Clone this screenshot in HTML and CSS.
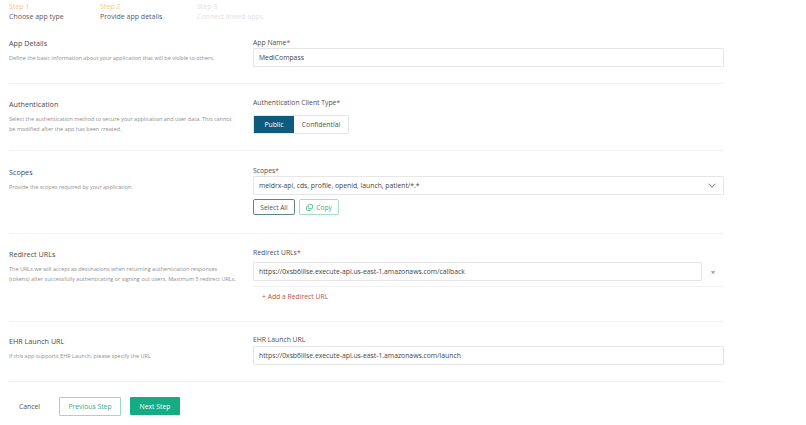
FILE: index.html
```html
<!DOCTYPE html>
<html>
<head>
<meta charset="utf-8">
<link rel="stylesheet" href="styles.css">
</head>
<body>
<div class="page">
  <div class="steps">
    <div class="step done"><div class="step-num">Step 1</div><div class="step-name">Choose app type</div></div>
    <div class="step current"><div class="step-num">Step 2</div><div class="step-name">Provide app details</div></div>
    <div class="step todo"><div class="step-num">Step 3</div><div class="step-name">Connect linked apps</div></div>
  </div>

  <div class="section s1">
    <div class="info">
      <div class="title">App Details</div>
      <div class="desc">Define the basic information about your application that will be visible to others.</div>
    </div>
    <div class="field">
      <div class="label">App Name<span class="req">*</span></div>
      <div class="input">MediCompass</div>
    </div>
  </div>

  <div class="section s2">
    <div class="info">
      <div class="title">Authentication</div>
      <div class="desc">Select the authentication method to secure your application and user data. This cannot<br>be modified after the app has been created.</div>
    </div>
    <div class="field">
      <div class="label">Authentication Client Type<span class="req">*</span></div>
      <div class="toggle">
        <div class="opt active">Public</div>
        <div class="opt">Confidential</div>
      </div>
    </div>
  </div>

  <div class="section s3">
    <div class="info">
      <div class="title">Scopes</div>
      <div class="desc">Provide the scopes required by your application.</div>
    </div>
    <div class="field">
      <div class="label">Scopes<span class="req">*</span></div>
      <div class="input select">
        <span>meldrx-api, cds, profile, openid, launch, patient/*.*</span>
        <svg class="chev" width="8" height="5" viewBox="0 0 8 5"><path d="M0.5 0.7 L4 4.2 L7.5 0.7" fill="none" stroke="#666" stroke-width="0.9"/></svg>
      </div>
      <div class="btns">
        <div class="btn sel">Select All</div>
        <div class="btn copy">
          <svg width="7" height="7" viewBox="0 0 8 8"><rect x="2.6" y="0.6" width="4.8" height="4.8" rx="1.2" fill="none" stroke="#3aa982" stroke-width="0.9"/><path d="M1.6 2.4 A1.2 1.2 0 0 0 0.6 3.6 V6.2 A1.2 1.2 0 0 0 1.8 7.4 H4.4 A1.2 1.2 0 0 0 5.6 6.4" fill="none" stroke="#3aa982" stroke-width="0.9"/></svg>
          Copy
        </div>
      </div>
    </div>
  </div>

  <div class="section s4">
    <div class="info">
      <div class="title">Redirect URLs</div>
      <div class="desc">The URLs we will accept as destinations when returning authentication responses<br>(tokens) after successfully authenticating or signing out users. Maximum 5 redirect URLs.</div>
    </div>
    <div class="field">
      <div class="label">Redirect URLs<span class="req">*</span></div>
      <div class="url-row">
        <div class="input grow">https://0xsb6lilse.execute-api.us-east-1.amazonaws.com/callback</div>
        <div class="remove">×</div>
      </div>
      <div class="add">+ Add a Redirect URL</div>
    </div>
  </div>

  <div class="section s5">
    <div class="info">
      <div class="title">EHR Launch URL</div>
      <div class="desc">If this app supports EHR Launch, please specify the URL</div>
    </div>
    <div class="field">
      <div class="label">EHR Launch URL</div>
      <div class="input">https://0xsb6lilse.execute-api.us-east-1.amazonaws.com/launch</div>
    </div>
  </div>

  <div class="footer">
    <div class="cancel">Cancel</div>
    <div class="fbtn prev">Previous Step</div>
    <div class="fbtn next">Next Step</div>
  </div>
</div>
</body>
</html>
```

FILE: styles.css
```css
* { box-sizing: border-box; }
html, body { margin: 0; padding: 0; background: #fff; }
body {
  font-family: "Open Sans", "Noto Sans", sans-serif;
  color: #444;
  width: 806px;
  height: 425px;
  overflow: hidden;
}
.page { padding-left: 9px; width: 724px; }

.steps { display: flex; height: 22px; padding-top: 2px; }
.step { font-size: 7px; line-height: 10px; }
.step.done { width: 91px; }
.step.current { width: 97px; }
.step-num { color: #f2c98e; }
.step-name { color: #5a5a5a; }
.step.todo .step-num, .step.todo .step-name { color: #e2e2e2; }

.section {
  display: flex;
  border-bottom: 1px solid #f1f1f1;
  padding-top: 16px;
}
.info { width: 244px; flex: none; }
.title { font-size: 7.2px; line-height: 10px; color: #4a4a4a; }
.desc {
  margin-top: 5px;
  font-size: 5.5px;
  line-height: 10px;
  color: #8f8f8f;
  width: 240px;
}
.field { width: 471px; flex: none; }
.label { font-size: 6.8px; line-height: 10px; color: #4f4f4f; }
.req { color: #c0392b; }
.input {
  height: 19px;
  border: 1px solid #e6e6e6;
  border-radius: 1px;
  font-size: 6.8px;
  line-height: 17px;
  padding-left: 5px;
  color: #444;
  white-space: nowrap;
}

.s1 { padding-bottom: 16px; }
.s2 { padding-top: 14px; padding-bottom: 16px; }
.s2 .label { margin-bottom: 2px; }
.s2 .title { margin-top: 1px; }
.s3 { padding-top: 15px; padding-bottom: 18px; }
.s3 .title { margin-top: 1px; }
.s4 { padding-top: 14px; padding-bottom: 19px; }
.s4 .title { margin-top: 1px; }
.s4 .label { margin-bottom: 4px; }
.s5 { padding-top: 13px; padding-bottom: 16px; }
.s5 .title { margin-top: 1px; }
.s5 .label { margin-bottom: 1px; }

.toggle {
  display: inline-flex;
  height: 19px;
  border: 1px solid #e6e6e6;
  border-radius: 1px;
  font-size: 6.8px;
}
.opt { line-height: 17px; color: #4f4f4f; }
.opt.active { background: #0f5b7e; color: #fff; width: 40px; text-align: center; }
.opt:not(.active) { width: 54px; text-align: center; }

.select { display: flex; align-items: center; justify-content: space-between; padding-right: 7px; }
.chev { flex: none; }

.btns { display: flex; gap: 4px; margin-top: 4px; }
.btn {
  height: 16px;
  border-radius: 2px;
  font-size: 6.6px;
  display: flex;
  align-items: center;
  justify-content: center;
}
.btn.sel { width: 42px; border: 1px solid #5e8388; color: #3d5a60; }
.btn.copy { width: 40px; border: 1px solid #a6dcc8; color: #3aa982; gap: 3px; }

.url-row { display: flex; align-items: center; padding-bottom: 5px; border-bottom: 1px solid #f1f1f1; }
.grow { width: 449px; }
.remove { width: 22px; text-align: center; font-size: 8px; line-height: 10px; color: #666; }
.add { padding-left: 9px; margin-top: 5px; font-size: 6.8px; line-height: 10px; color: #b5544c; }

.footer { display: flex; align-items: center; height: 48px; }
.cancel { font-size: 6.8px; color: #4f4f4f; padding-left: 10px; width: 50px; }
.fbtn {
  height: 19px;
  font-size: 6.8px;
  display: flex;
  align-items: center;
  justify-content: center;
  border-radius: 1px;
}
.fbtn.prev { width: 62px; border: 1px solid #9fd8c5; color: #3aa982; }
.fbtn.next { width: 50px; height: 18px; margin-left: 9px; background: #17ab83; color: #fff; }
```
